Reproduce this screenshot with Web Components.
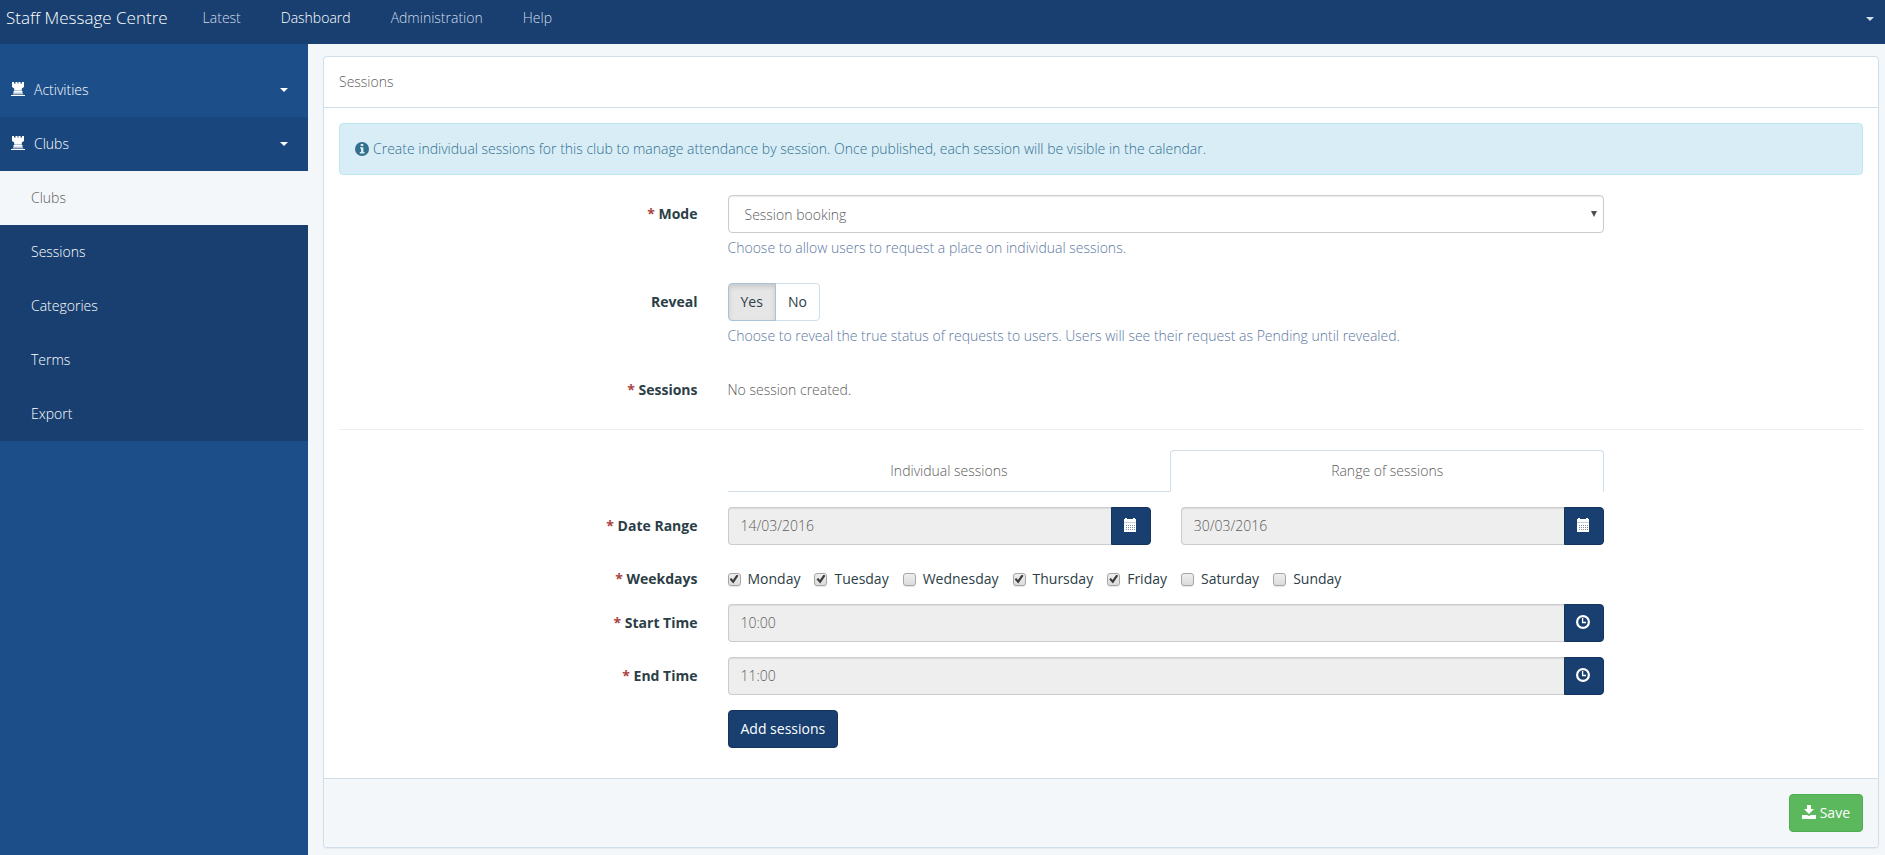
<!DOCTYPE html>
<html lang="en">
<head>
<meta charset="utf-8">
<title>Staff Message Centre</title>
<style>
  html { height: 100%; }
  body {
    margin: 0; min-height: 100%; display: flex; flex-direction: column;
    background: #f4f7fa; color: #5c5c5c;
    font: 300 14px/20px "Open Sans", "Noto Sans", sans-serif;
    --navy: #183f70; --line: #d0dee9; --ink: #2c3e46;
  }
  .layout { flex: 1; display: flex; align-items: stretch; }
  session-panel { flex: 1; min-width: 0; margin: 12px 6px 6px 15px; }
</style>
</head>
<body>
<app-header>Staff Message Centre</app-header>
<div class="layout">
  <side-nav></side-nav>
  <session-panel>
    <span slot="title">Sessions</span>
    <info-alert>Create individual sessions for this club to manage attendance by session. Once published, each session will be visible in the calendar.</info-alert>
    <select-row label="Mode" required options="Session booking|Term booking">Choose to allow users to request a place on individual sessions.</select-row>
    <toggle-row label="Reveal">Choose to reveal the true status of requests to users. Users will see their request as Pending until revealed.</toggle-row>
    <static-row label="Sessions" required>No session created.</static-row>
    <rule-line></rule-line>
    <tabs-row></tabs-row>
    <dates-row label="Date Range" required></dates-row>
    <weekdays-row label="Weekdays" required></weekdays-row>
    <time-row label="Start Time" required value="10:00"></time-row>
    <time-row label="End Time" required value="11:00"></time-row>
    <action-row>Add sessions</action-row>
    <save-button slot="footer">Save</save-button>
  </session-panel>
</div>
<script>
const BASE = `
  *, *::before, *::after { box-sizing: border-box; }
  :host { display: block; box-sizing: border-box; }
  a { color: inherit; text-decoration: none; }
  button, input, select { font: inherit; margin: 0; }
  svg { display: block; flex: none; }
`;
const CARET = `.caret { flex: none; border: 4px solid transparent; border-top-color: currentColor; border-bottom: 0; }`;
const BUTTON = `
  .btn { height: 38px; padding: 0 12px; border: 1px solid #14345d; border-radius: 4px;
         background: var(--navy); color: #fff; font-weight: 400; cursor: pointer; }
`;
const CONTROL = `
  .control { display: block; width: 100%; height: 38px; padding: 0 12px; border: 1px solid #ccc; border-radius: 4px;
             background: #fff; color: #5c5c5c; box-shadow: inset 0 1px 1px rgba(0,0,0,.08); }
  .group { display: flex; }
  .group .control { flex: 1; min-width: 0; padding-bottom: 1px; background: #eee; border-right: 0; border-radius: 4px 0 0 4px; }
  .group .btn { width: 40px; padding: 0 13px 2px 11px; border-radius: 0 4px 4px 0; }
`;
const ICONS = {
  tower: `<svg width="14" height="16" viewBox="0 0 14 16" aria-hidden="true"><path fill="#fff" d="M1 0h2v1.500h1.500V0h2v1.500h1V0h2v1.500H11V0h2v5L10.800 6.500V8H3.200V6.500L1 5z"/><path fill="#b9c9dc" d="M3.200 8h7.600v1H3.200zM3 10h8l1.500 2.500h-11z"/><path fill="#fff" d="M2.500 9h9v1.500h-9zM0 13h14v1H0z"/></svg>`,
  info: `<svg width="14" height="14" viewBox="0 0 14 14" aria-hidden="true"><circle cx="7" cy="7" r="7" fill="#31708f"/><path fill="#d9edf7" d="M5.700 2h2.600v2H5.700zM5 5.200h3.400V10H9.500v1.500H4.800V10H6V6.600H5z"/></svg>`,
  calendar: `<svg width="14" height="14" viewBox="0 0 14 14" aria-hidden="true"><path fill="#fff" d="M1 1h1V0h2v1h6V0h2v1h1v3H1z"/><path fill="#c8d1de" d="M1 4h12v1H1z"/><path fill="#fff" d="M1 5h12v9H1z"/><path stroke="#7b8fab" stroke-width="1" stroke-dasharray="1 1" d="M3 7.500h9M3 9.500h9M3 11.500h9"/></svg>`,
  clock: `<svg width="14" height="14" viewBox="0 0 14 14" aria-hidden="true"><circle cx="7" cy="7" r="5.900" fill="none" stroke="#fff" stroke-width="2.200"/><path fill="none" stroke="#fff" stroke-width="1.300" d="M6.600 3v4.500H10"/></svg>`,
  save: `<svg width="14" height="16" viewBox="0 0 14 16" aria-hidden="true"><path fill="#fff" d="M5 0h4v4h3L7 9 2 4h3zM0 10h5l2 1 2-1h5v4H0z"/></svg>`
};

function define(name, markup, wire) {
  customElements.define(name, class extends HTMLElement {
    constructor() {
      super();
      this.attachShadow({ mode: 'open' });
    }
    connectedCallback() {
      this.shadowRoot.innerHTML = typeof markup === 'function' ? markup(this) : markup;
      if (wire) wire(this.shadowRoot);
    }
  });
}

/* One horizontal form row: a quarter-width label, then a control column. */
function defineRow(name, css, control, wire) {
  define(name, el => {
    const label = el.getAttribute('label');
    const star = el.hasAttribute('required') ? '<span class="star">*</span> ' : '';
    return `<style>${BASE}${BUTTON}${CONTROL}
      :host { margin-bottom: 15px; }
      .row { display: grid; grid-template-columns: 3fr 7fr 2fr; margin: 0 -15px; }
      .row > * { padding: 0 15px; min-width: 0; }
      .row > .name { padding-top: 9px; text-align: right; font-weight: 700; color: var(--ink); }
      .star { color: #a94442; }
      .help { margin: 5px 0 10px; color: #5c789f; }
      .col { grid-column: 2; }
      ${css}</style>
      <div class="row">${label ? `<label class="name" id="name" for="field">${star}${label}</label>` : ''}
      <div class="col">${control(el)}</div></div>`;
  }, wire);
}

define('app-header', `<style>${BASE}${CARET}
  :host { background: var(--navy); color: #fff; }
  header { display: flex; height: 44px; line-height: 36px; padding: 0 11px 0 6px; }
  .brand { font-size: 17px; margin-right: 15px; }
  nav { display: flex; }
  nav a { padding: 0 20px; color: #d0dbe9; }
  nav a.on { color: #fff; }
  .account { margin-left: auto; padding: 2px 0 0; height: 36px; border: 0; background: none; color: #d3dde9; display: flex; align-items: center; }
</style>
<header><a class="brand" href="#"><slot></slot></a>
<nav><a href="#">Latest</a><a class="on" href="#">Dashboard</a><a href="#">Administration</a><a href="#">Help</a></nav>
<button class="account" aria-label="Account"><span class="caret"></span></button></header>`);

define('side-nav', `<style>${BASE}${CARET}
  :host { flex: 0 0 308px; padding-top: 19px; background: #1c4e8a; color: #fff; }
  a { display: flex; align-items: center; height: 54px; padding: 0 20px 0 11px; }
  .label { margin-left: 9px; flex: 1; }
  .open { background: #1a467e; }
  .sub { background: var(--navy); }
  .sub a { padding-left: 31px; }
  .sub a.on { background: #f4f7fa; color: #5c5c5c; }
</style>
<nav>
  <a href="#">${ICONS.tower}<span class="label">Activities</span><span class="caret"></span></a>
  <a class="open" href="#">${ICONS.tower}<span class="label">Clubs</span><span class="caret"></span></a>
  <div class="sub"><a class="on" href="#">Clubs</a><a href="#">Sessions</a><a href="#">Categories</a><a href="#">Terms</a><a href="#">Export</a></div>
</nav>`);

define('session-panel', `<style>${BASE}
  :host { align-self: flex-start; background: #fff; border: 1px solid var(--line); border-radius: 4px; box-shadow: 0 1px 1px rgba(0,0,0,.05); }
  header { padding: 15px; border-bottom: 1px solid var(--line); }
  .body { display: flow-root; padding: 15px; }
  footer { display: flex; justify-content: flex-end; padding: 15px; background: #f4f7fa; border-top: 1px solid var(--line); border-radius: 0 0 3px 3px; }
</style>
<header><slot name="title"></slot></header>
<div class="body"><slot></slot></div>
<footer><slot name="footer"></slot></footer>`);

define('info-alert', `<style>${BASE}
  :host { display: flex; align-items: center; gap: 4px; padding: 15px; margin-bottom: 20px; background: #d9edf7; border: 1px solid #bce8f1; border-radius: 4px; color: #31708f; }
</style>${ICONS.info}<span><slot></slot></span>`);

define('rule-line', `<style>${BASE} :host { padding: 5px 0 20px; } hr { margin: 0; border: 0; border-top: 1px solid #eee; }</style><hr>`);

define('save-button', `<style>${BASE}${BUTTON}
  .btn { display: flex; align-items: center; gap: 4px; background: #5cb85c; border-color: #4cae4c; }
</style><button class="btn" type="submit">${ICONS.save}<slot></slot></button>`);

defineRow('select-row', `
  .wrap { position: relative; }
  select { appearance: none; }
  select.control { padding: 1px 16px 0; }
  .arrow { position: absolute; right: 7px; top: 16px; width: 6px; height: 6px; background: #505050; clip-path: polygon(0 0, 100% 0, 50% 100%); pointer-events: none; }
`, el => `<div class="wrap"><select class="control" id="field">${el.getAttribute('options').split('|').map(o => `<option>${o}</option>`).join('')}</select><span class="arrow"></span></div>
<p class="help"><slot></slot></p>`);

defineRow('toggle-row', `
  .pair { display: flex; }
  .btn { background: #fff; border-color: var(--line); color: var(--ink); border-radius: 0 4px 4px 0; }
  .btn + .btn { margin-left: -1px; }
  .btn:first-child { border-radius: 4px 0 0 4px; }
  .btn[aria-pressed="true"] { position: relative; background: #e6e6e6; border-color: #a9c2d6; box-shadow: inset 0 3px 5px rgba(0,0,0,.125); }
`, () => `<div class="pair"><button class="btn" id="field" type="button" aria-pressed="true">Yes</button><button class="btn" type="button" aria-pressed="false">No</button></div>
<p class="help"><slot></slot></p>`,
root => {
  const buttons = root.querySelectorAll('.btn');
  buttons.forEach(b => b.addEventListener('click', () => buttons.forEach(o => o.setAttribute('aria-pressed', o === b))));
});

defineRow('static-row', `.text { display: block; padding: 9px 0; }`, () => `<output class="text" id="field"><slot></slot></output>`);

defineRow('tabs-row', `
  .tabs { display: table; width: 100%; }
  .tabs a { display: table-cell; height: 42px; padding: 11px 15px 0; text-align: center; border-bottom: 1px solid var(--line); }
  .tabs a.on { border: 1px solid var(--line); padding-top: 10px; border-bottom-color: transparent; border-radius: 4px 4px 0 0; }
`, () => `<div class="tabs" role="tablist"><a href="#" role="tab" aria-selected="false">Individual sessions</a><a class="on" href="#" role="tab" aria-selected="true">Range of sessions</a></div>`);

const picker = (id, value, icon, hint) => `<div class="group"><input class="control" id="${id}" value="${value}" readonly aria-labelledby="name"><button class="btn" type="button" aria-label="${hint}">${icon}</button></div>`;
defineRow('dates-row', `.pair { display: grid; grid-template-columns: 1fr 1fr; gap: 30px; }`,
  () => `<div class="pair">${picker('field', '14/03/2016', ICONS.calendar, 'Pick start date')}${picker('until', '30/03/2016', ICONS.calendar, 'Pick end date')}</div>`);
defineRow('time-row', '', el => picker('field', el.getAttribute('value'), ICONS.clock, 'Pick time'));

defineRow('weekdays-row', `
  .days { display: flex; flex-wrap: wrap; gap: 0 14px; padding-top: 9px; }
  .days label { display: flex; align-items: center; gap: 7px; font-weight: 400; color: var(--ink); }
  input { appearance: none; width: 13px; height: 13px; border: 1px solid #a6a6a6; border-radius: 3px; background: linear-gradient(#eee, #dcdcdc); box-shadow: 0 1px 1px rgba(0,0,0,.1); display: grid; place-items: center; }
  input:checked::before { content: ""; width: 9px; height: 9px; background: #3c3c3c; clip-path: polygon(0 52%, 20% 38%, 38% 60%, 80% 0, 100% 14%, 42% 100%); }
`, () => `<div class="days">${['Monday', 'Tuesday', 'Wednesday', 'Thursday', 'Friday', 'Saturday', 'Sunday'].map((d, i) =>
  `<label><input type="checkbox" ${i ? '' : 'id="field"'} ${[0, 1, 3, 4].includes(i) ? 'checked' : ''}>${d}</label>`).join('')}</div>`);

defineRow('action-row', '', () => `<button class="btn" type="button"><slot></slot></button>`);
</script>
</body>
</html>
